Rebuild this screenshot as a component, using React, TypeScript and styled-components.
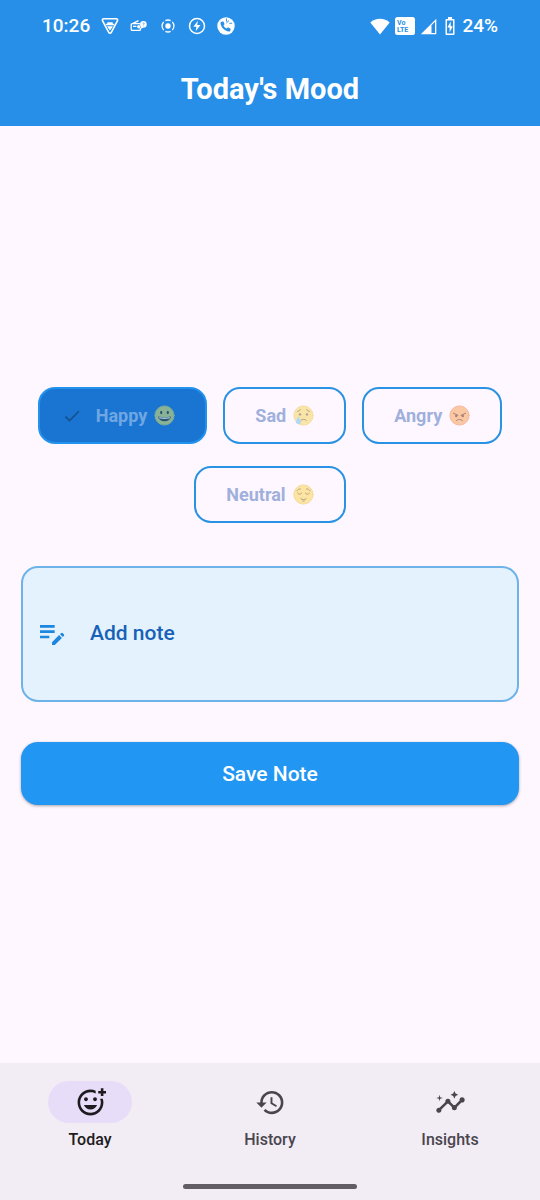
import React, { useState } from "react";
import styled, { createGlobalStyle } from "styled-components";
import { MdCheck, MdEditNote, MdHistory, MdInsights, MdOutlineAddReaction } from "react-icons/md";

const GlobalStyle = createGlobalStyle`
  *, *::before, *::after { box-sizing: border-box; }
  body { margin: 0; background: #fef7ff; }
  body, button, textarea { font-family: Roboto, "Liberation Sans", sans-serif; }
`;

const Screen = styled.div`
  min-height: 100vh;
  display: flex;
  flex-direction: column;
  background: #fef7ff;
`;

const Header = styled.header`
  background: #288fe8;
  color: #fff;
`;

const StatusBar = styled.div`
  display: flex;
  justify-content: space-between;
  align-items: center;
  height: 52px;
  padding: 0 42px;
  font-size: 19px;
  line-height: 24px;
  font-weight: 500;
`;

const StatusGroup = styled.div<{ $gap: number }>`
  display: flex;
  align-items: center;
  gap: ${(p) => p.$gap}px;
  svg { display: block; }
`;

const Title = styled.h1`
  margin: 0;
  padding: 19px 16px;
  text-align: center;
  font-size: 29px;
  line-height: 36px;
  font-weight: 700;
`;

const Main = styled.main`
  flex: 1;
  display: flex;
  flex-direction: column;
  justify-content: center;
  gap: 40px;
  padding: 24px 21px 21px;
`;

const Chips = styled.div`
  display: flex;
  flex-wrap: wrap;
  justify-content: center;
  gap: 22px 16px;
  margin-bottom: 3px;
`;

const Chip = styled.button<{ $selected: boolean }>`
  display: flex;
  align-items: center;
  height: 57px;
  padding: 0 30px 0 ${(p) => (p.$selected ? 22 : 30)}px;
  border: 2px solid ${(p) => (p.$selected ? "#2392ec" : "#2a92e2")};
  border-radius: 17px;
  background: ${(p) => (p.$selected ? "#1a75d2" : "transparent")};
  color: ${(p) => (p.$selected ? "#70a7e2" : "#a0b0dc")};
  font-size: 18px;
  line-height: 24px;
  font-weight: 700;
  white-space: nowrap;
  svg { display: block; flex: none; }
`;

const ChipCheck = styled(MdCheck)`
  margin-right: 14px;
  color: #15508c;
  stroke: #15508c;
`;

const ChipText = styled.span`
  margin-right: 7px;
`;

const NoteField = styled.label`
  display: flex;
  align-items: center;
  gap: 22px;
  height: 136px;
  padding: 0 16px 2px 13px;
  border: 2px solid #6db3ea;
  border-radius: 17px;
  background: #e3f2fd;
  color: #1e86dc;
  svg { flex: none; }
`;

const NoteInput = styled.textarea`
  flex: 1;
  min-width: 0;
  height: 28px;
  padding: 0;
  border: 0;
  outline: 0;
  resize: none;
  overflow: hidden;
  background: transparent;
  color: #1761b6;
  font-size: 21px;
  line-height: 28px;
  font-weight: 500;
  &::placeholder { color: #1761b6; opacity: 1; }
`;

const SaveButton = styled.button`
  height: 63px;
  border: 0;
  border-radius: 17px;
  background: #2196f3;
  color: #fff;
  font-size: 21px;
  line-height: 28px;
  font-weight: 500;
  box-shadow: 0 1px 3px rgba(0, 0, 0, 0.35);
`;

const BottomBar = styled.footer`
  display: flex;
  flex-direction: column;
  align-items: center;
  background: #f2ecf4;
`;

const Tabs = styled.nav`
  align-self: stretch;
  display: grid;
  grid-template-columns: repeat(3, 1fr);
  padding-top: 18px;
`;

const Tab = styled.button<{ $active: boolean }>`
  display: flex;
  flex-direction: column;
  align-items: center;
  gap: 7px;
  padding: 0;
  border: 0;
  background: transparent;
  color: ${(p) => (p.$active ? "#1d1b20" : "#49454f")};
  font-size: 16px;
  line-height: 20px;
  font-weight: 500;
`;

const TabIcon = styled.span<{ $active: boolean }>`
  display: flex;
  align-items: center;
  justify-content: center;
  width: 84px;
  height: 42px;
  border-radius: 21px;
  background: ${(p) => (p.$active ? "#e7ddf8" : "transparent")};
`;

const HomeIndicator = styled.div`
  width: 174px;
  height: 5px;
  margin: 34px 0 11px;
  border-radius: 3px;
  background: #625c64;
`;

function ShieldIcon() {
  return (
    <svg width="18" height="18" viewBox="0 0 18 18" fill="none" stroke="#fff" aria-hidden="true">
      <path d="M2.8 1.8h12.4c1.2 0 1.8 1 1.2 2L10.3 15.4c-.6 1.1-2 1.1-2.6 0L1.6 3.8c-.6-1 0-2 1.2-2Z" strokeWidth="1.6" />
      <path d="M6.3 5.3h5.4v1.500h1.500v1.400H4.800V6.800h1.500ZM6 9.300h6L9 13.600Z" fill="#fff" stroke="none" />
    </svg>
  );
}

function RadioIcon() {
  return (
    <svg width="18" height="14" viewBox="0 0 18 14" fill="none" stroke="#fff" aria-hidden="true">
      <path d="M10 4.600H2.200c-.7 0-1 .3-1 1v4.800c0 .7.3 1 1 1h7.200c.7 0 1-.3 1-1V9M3 4.400 8.500 1.700M3 7.300h3.500" strokeWidth="1.300" />
      <circle cx="8.800" cy="7.800" r="1.700" fill="#fff" stroke="none" />
      <circle cx="13.400" cy="5.400" r="3.300" fill="#fff" stroke="none" />
      <path d="m11.200 7.300-.6 2.700 2.800-1.400Z" fill="#fff" stroke="none" />
      <path d="M12.600 4.200c.9-.8 2.200.1 1.100 1.200v.5M13.700 6.700v.6" stroke="#288fe8" strokeWidth=".7" />
    </svg>
  );
}

function TargetIcon() {
  return (
    <svg width="18" height="14" viewBox="-2 0 18 14" fill="none" stroke="#fff" strokeWidth="1.300" aria-hidden="true">
      <path d="M4.400 1.600A6 6 0 0 1 9.600 1.600M4.400 12.400a6 6 0 0 0 5.200 0M2.700 2.900A6 6 0 0 0 2.700 11.100M11.300 2.900a6 6 0 0 1 0 8.200" />
      <circle cx="7" cy="7" r="2.700" fill="#fff" stroke="none" />
    </svg>
  );
}

function BoltIcon() {
  return (
    <svg width="18" height="18" viewBox="0 0 18 18" aria-hidden="true">
      <circle cx="9" cy="9" r="7.500" fill="none" stroke="#fff" strokeWidth="1.500" />
      <path d="M9.800 3.800 5.400 9.700h3l-.7 4.500 4.800-6.200H9.300Z" fill="#fff" />
    </svg>
  );
}

function CallIcon() {
  return (
    <svg width="18" height="18" viewBox="0 0 19 19" aria-hidden="true">
      <circle cx="9.500" cy="9.500" r="9.200" fill="#fff" />
      <path
        d="M4.300 5.300 6 4.700c.4-.1.700 0 .9.400l.9 2c.2.400.1.700-.2 1l-.8.800c.7 1.500 1.800 2.600 3.300 3.300l.9-.9c.3-.3.600-.3 1-.1l2 1c.4.200.5.500.4.900l-.6 1.600c-.2.500-.6.700-1.200.6-4.700-.6-8.200-4-8.900-8.700-.1-.6.100-1.100.6-1.300Z"
        fill="#288fe8"
      />
      <path d="M10 1.600v3.200M9.800 6.400l2.900-2.700M13 6.600h3" fill="none" stroke="#288fe8" strokeWidth="1" />
    </svg>
  );
}

function WifiIcon() {
  return (
    <svg width="20" height="17" viewBox="0 0 20 17" aria-hidden="true">
      <path d="M10 16.500.3 4.400C3 2 6.300.7 10 .7s7 1.300 9.700 3.700Z" fill="#fff" />
    </svg>
  );
}

function VolteIcon() {
  return (
    <svg width="20" height="18" viewBox="0 0 20 18" role="img" aria-label="VoLTE">
      <rect width="20" height="18" rx="2.500" fill="#fff" />
      <text x="2" y="8" fontFamily="Roboto, sans-serif" fontSize="7" fontWeight="700" fill="#288fe8">Vo</text>
      <text x="2" y="15" fontFamily="Roboto, sans-serif" fontSize="7" fontWeight="700" fill="#288fe8">LTE</text>
    </svg>
  );
}

function SignalIcon() {
  return (
    <svg width="17" height="17" viewBox="0 0 17 17" aria-hidden="true">
      <path d="M16.300.8v15.500H.8Z" fill="#fff" />
      <path d="M11.500 7.200 15 3.800v11.200h-3.500Z" fill="#288fe8" />
    </svg>
  );
}

function BatteryIcon() {
  return (
    <svg width="15" height="18" viewBox="-3 0 15 18" aria-hidden="true">
      <path d="M3 0h4v2h1.500q1 0 1 1v14q0 1-1 1h-7q-1 0-1-1V3q0-1 1-1H3Z" fill="#fff" />
      <path d="M2 3.500h6v13H2Z" fill="#288fe8" />
      <path d="M5.700 4.500 2.400 10.600h2.200v4.900l3.200-6.200H5.700Z" fill="#fff" />
    </svg>
  );
}

type Mood = "happy" | "sad" | "angry" | "neutral";

const faceColors: Record<Mood, [string, string, string]> = {
  happy: ["#88b397", "#7aa994", "#2c5470"],
  sad: ["#fae5a8", "#f6dca0", "#b9a08c"],
  angry: ["#fac9a4", "#f5b89c", "#a97f78"],
  neutral: ["#fce5a3", "#f5da98", "#bda083"],
};

function MoodFace({ mood }: { mood: Mood }) {
  const [fill, edge, ink] = faceColors[mood];
  return (
    <svg width="21" height="21" viewBox="0 0 21 21" fill="none" stroke={ink} strokeWidth="1" strokeLinecap="round" aria-hidden="true">
      <circle cx="10.500" cy="10.500" r="9.600" fill={fill} stroke={edge} strokeWidth="1" />
      {mood === "happy" && (
        <g stroke="none">
          <ellipse cx="7.200" cy="7.500" rx="1.100" ry="1.700" fill={ink} />
          <ellipse cx="13.800" cy="7.500" rx="1.100" ry="1.700" fill={ink} />
          <path d="M4 11.500c4.200 1 8.800 1 13 0-.5 3.100-3 4.800-6.500 4.800S4.500 14.600 4 11.500Z" fill={ink} />
          <path d="M5 12c3.600.8 7.400.8 11 0l-.5 1.500c-3.300.6-6.700.6-10 0Z" fill="#a9c8e0" />
        </g>
      )}
      {mood === "sad" && (
        <g>
          <path d="M4.500 6.400c1.200-.1 2.200-.8 2.800-1.800M16.500 6.400c-1.200-.1-2.200-.8-2.800-1.800M7.800 15.500c1.500-1.700 4-1.700 5.500 0" />
          <circle cx="7" cy="9.400" r="1.200" fill={ink} stroke="none" />
          <circle cx="14" cy="9.400" r="1.200" fill={ink} stroke="none" />
          <path d="M5.200 11.500c2 2.700 3.200 4.200 2.800 6-.5 2.200-4.300 2.200-5 0-.5-1.700.8-3.300 2.200-6Z" fill="#b3d8f3" stroke="none" />
        </g>
      )}
      {mood === "angry" && (
        <g>
          <path d="M4.400 8.200 9 10.300M16.600 8.200 12 10.300M7.200 15.800c1.700-1.900 4.900-1.900 6.600 0" />
          <circle cx="7.200" cy="11" r="1.200" fill={ink} stroke="none" />
          <circle cx="13.800" cy="11" r="1.200" fill={ink} stroke="none" />
        </g>
      )}
      {mood === "neutral" && (
        <g>
          <path d="M4 6.800c.8-1.400 2-2 3.500-1.800M17 6.800c-.8-1.400-2-2-3.500-1.800M4.600 9.200c1.200 1.300 2.800 1.300 4 0M12.400 9.200c1.200 1.300 2.800 1.300 4 0M8 14.800c1.500 1.100 3.500 1.100 5 0M9.700 17h1.600" />
        </g>
      )}
    </svg>
  );
}

const moods: { id: Mood; label: string }[] = [
  { id: "happy", label: "Happy" },
  { id: "sad", label: "Sad" },
  { id: "angry", label: "Angry" },
  { id: "neutral", label: "Neutral" },
];

const tabs = [
  { label: "Today", Icon: MdOutlineAddReaction },
  { label: "History", Icon: MdHistory },
  { label: "Insights", Icon: MdInsights },
];

export default function App() {
  const selected: Mood = "happy";
  const [note, setNote] = useState("");
  const [tab, setTab] = useState("Today");

  return (
    <Screen>
      <GlobalStyle />
      <Header>
        <StatusBar>
          <StatusGroup $gap={11}>
            <span>10:26</span>
            <ShieldIcon />
            <RadioIcon />
            <TargetIcon />
            <BoltIcon />
            <CallIcon />
          </StatusGroup>
          <StatusGroup $gap={5}>
            <WifiIcon />
            <VolteIcon />
            <SignalIcon />
            <BatteryIcon />
            <span>24%</span>
          </StatusGroup>
        </StatusBar>
        <Title>Today's Mood</Title>
      </Header>

      <Main>
        <Chips role="group" aria-label="Mood">
          {moods.map(({ id, label }) => (
            <Chip key={id} type="button" disabled aria-pressed={id === selected} $selected={id === selected}>
              {id === selected && <ChipCheck size={20} aria-hidden="true" />}
              <ChipText>{label}</ChipText>
              <MoodFace mood={id} />
            </Chip>
          ))}
        </Chips>
        <NoteField>
          <MdEditNote size={32} aria-hidden="true" />
          <NoteInput
            aria-label="Add note"
            placeholder="Add note"
            rows={1}
            value={note}
            onChange={(e) => setNote(e.target.value)}
          />
        </NoteField>
        <SaveButton type="button">Save Note</SaveButton>
      </Main>

      <BottomBar>
        <Tabs>
          {tabs.map(({ label, Icon }) => (
            <Tab
              key={label}
              type="button"
              $active={tab === label}
              aria-current={tab === label ? "page" : undefined}
              onClick={() => setTab(label)}
            >
              <TabIcon $active={tab === label}>
                <Icon size={31} aria-hidden="true" />
              </TabIcon>
              <span>{label}</span>
            </Tab>
          ))}
        </Tabs>
        <HomeIndicator />
      </BottomBar>
    </Screen>
  );
}
